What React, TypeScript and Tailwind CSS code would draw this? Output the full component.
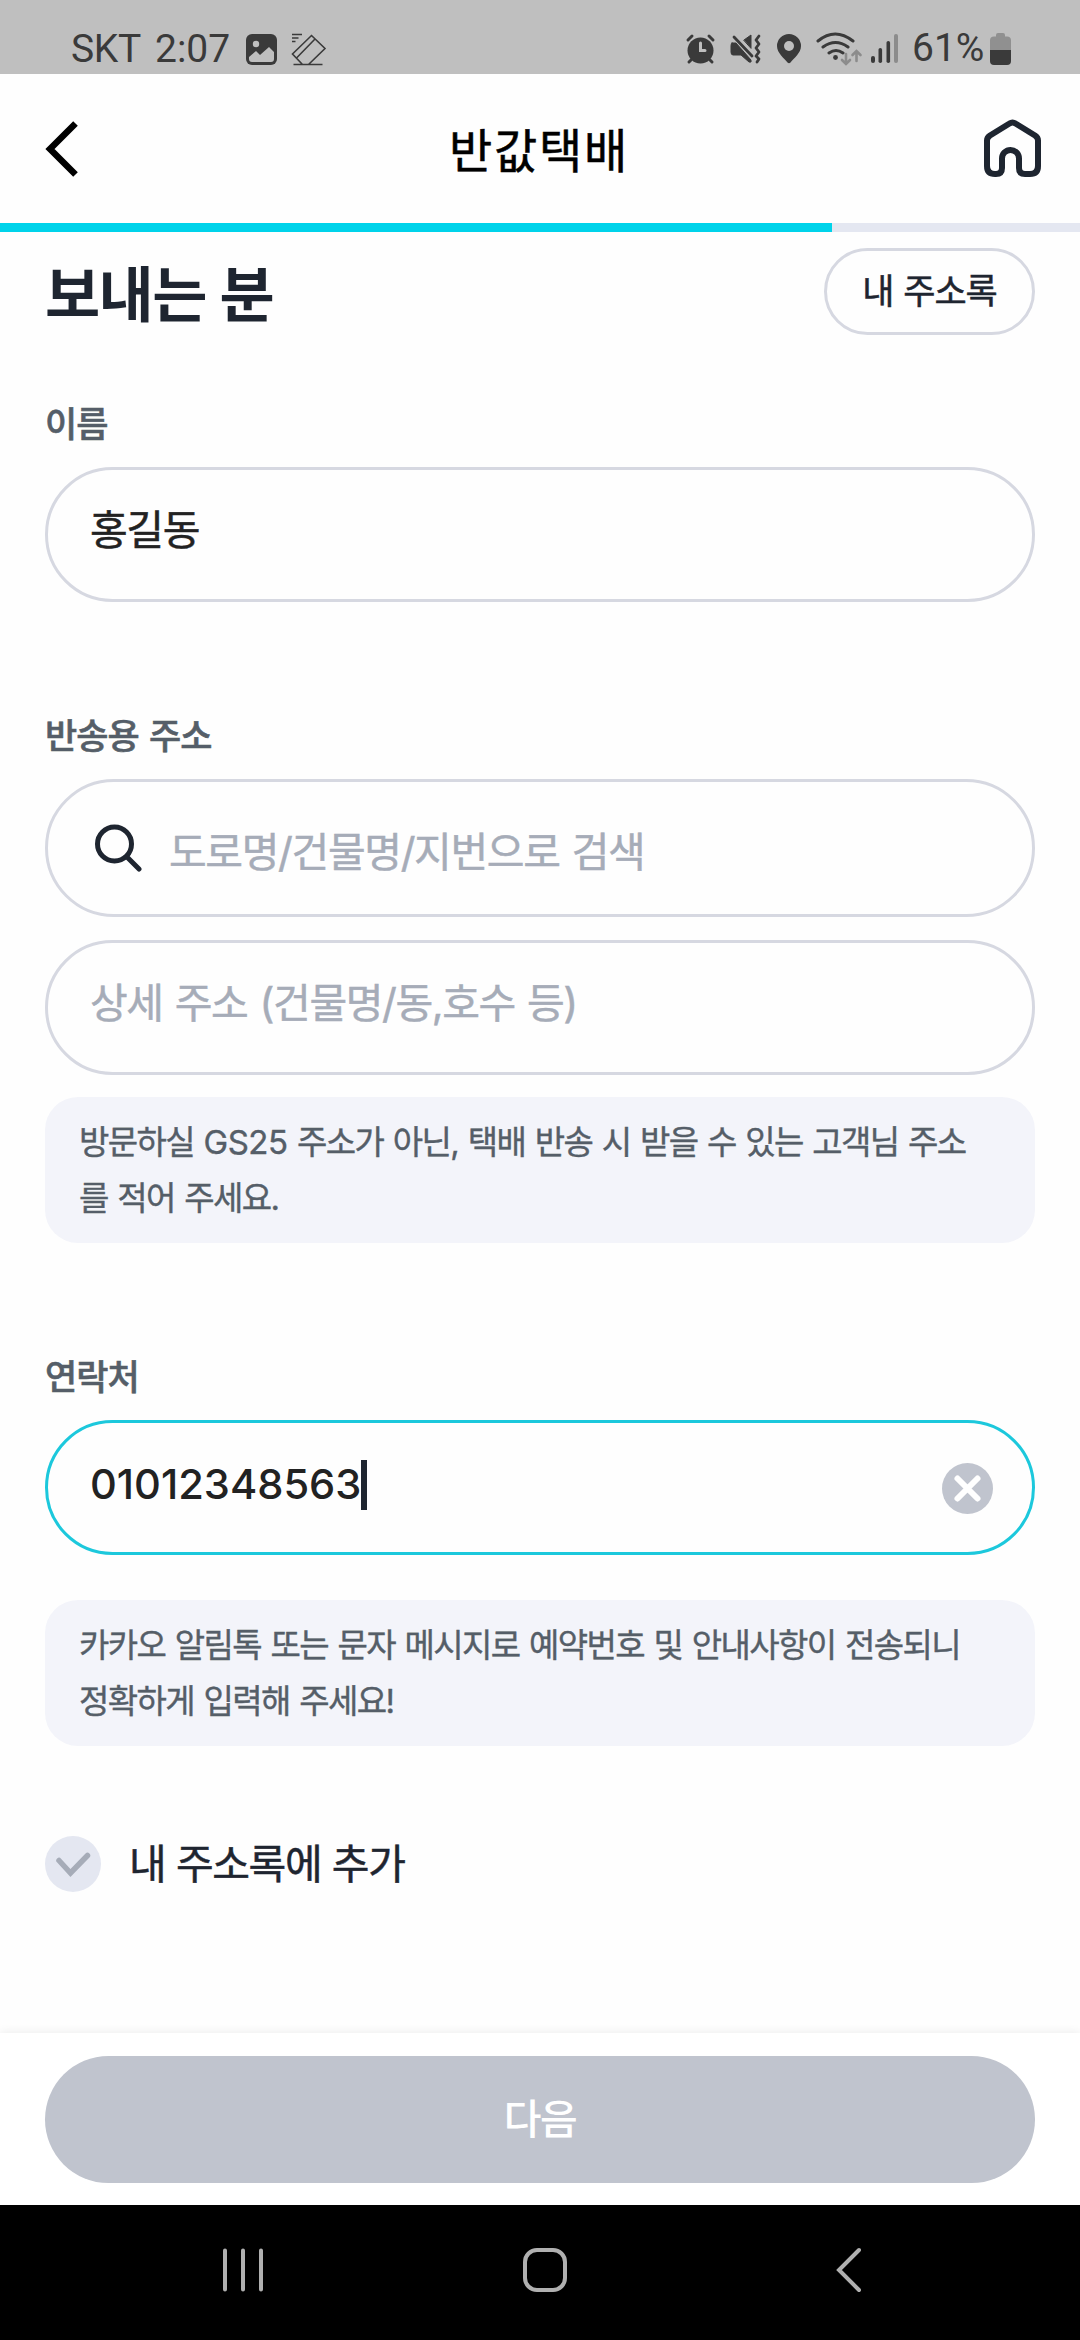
import { useState } from 'react'
import type { ReactNode } from 'react'

function StatusBar() {
  return (
    <div className="flex h-[74px] shrink-0 items-start bg-[#bfbfbf] text-[#3a3a3a]">
      <div className="ml-[71px] flex pt-[26px] font-[Roboto] text-[39px] leading-[46px]">
        <span className="w-[84px] tracking-[-0.3px]">SKT</span>
        <span className="w-[91px]">2:07</span>
      </div>
      <svg className="mt-[34px] h-[31px] w-[31px]" viewBox="0 0 31 31">
        <rect width="31" height="31" rx="6" fill="currentColor" />
        <circle cx="10" cy="10" r="3.2" fill="#bfbfbf" />
        <path d="M3 23l7-6 4 4 9-8 5 5v7q0 3-3 3H6q-3 0-3-3z" fill="#bfbfbf" />
      </svg>
      <svg className="mt-[33px] ml-[14px] h-[33px] w-[36px]" viewBox="0 0 36 33" fill="none" stroke="currentColor" strokeWidth="1.6">
        <path d="M1 1.500h10M1 5h6.500M1 8.500h3.500M20.500 2.500L34 15.500 17.500 31.500h-6L1.500 21zM5.500 25L24 6M2.500 31.500h29" />
      </svg>

      <div className="ml-auto flex pt-[32px]">
        <svg className="h-[36px] w-[182px]" viewBox="0 0 182 36" fill="none" stroke="currentColor" strokeLinecap="round">
          {/* alarm */}
          <circle cx="16.500" cy="18.500" r="13" fill="currentColor" stroke="none" />
          <path d="M4 8l4-4M29 8l-4-4M7 28l-2 2M26 28l2 2" strokeWidth="3" />
          <path d="M16.500 11v7.500H21" stroke="#bfbfbf" strokeWidth="3" />
          {/* muted + vibrate */}
          <path d="M48 11h4l15 17q1 3-2 2l-8-7h-8q-2 0-2-3v-6q0-3 1-3zM60 8l7-5v13z" fill="currentColor" stroke="currentColor" strokeWidth="1" />
          <path d="M50 5l18 19" strokeWidth="2.8" />
          <path d="M75 4l-3 4 3 4-3 4 3 4-3 4 3 3-2 3" strokeWidth="2.800" strokeLinejoin="round" />
          {/* location */}
          <path d="M105 2a12 12 0 0 1 12 12c0 7-7 12-10.500 16.500q-1.500 1.500-3 0C100 26 93 21 93 14a12 12 0 0 1 12-12z" fill="currentColor" stroke="none" />
          <circle cx="105" cy="14" r="5" fill="#bfbfbf" stroke="none" />
          {/* wifi */}
          <path d="M134 9q17-14 35 0M139 15q12.500-9 25 0M145 21q7-5 14 0" strokeWidth="3" />
          <circle cx="151.500" cy="25.500" r="2.400" fill="currentColor" stroke="none" />
          <path d="M162 22v9M158 28l4 4 4-4M172.500 29v-9M168.500 23l4-4 4 4" stroke="#8c8c8c" strokeWidth="2.600" />
        </svg>
        <svg className="ml-[5px] h-[36px] w-[29px]" viewBox="0 0 29 36">
          <rect x="0" y="24" width="4" height="7" rx="2" fill="currentColor" />
          <rect x="7.500" y="16" width="3.600" height="15" rx="1.800" fill="currentColor" />
          <rect x="15.500" y="9" width="3.600" height="22" rx="1.800" fill="currentColor" />
          <rect x="23" y="2" width="4" height="29" rx="2" fill="#8c8c8c" />
        </svg>
      </div>
      <span className="ml-[12px] w-[78px] pt-[25px] font-[Roboto] text-[39px] leading-[46px]">61%</span>
      <svg className="mt-[33px] mr-[69px] h-[32px] w-[21px]" viewBox="0 0 21 32">
        <path d="M6 2q0-2 2-2h5q2 0 2 2v1.500h2q4 0 4 4V17H0V7.500q0-4 4-4h2z" fill="#909090" />
        <path d="M0 17h21v11q0 4-4 4H4q-4 0-4-4z" fill="currentColor" />
      </svg>
    </div>
  )
}

function Header() {
  return (
    <header className="flex h-[149px] shrink-0 items-center justify-between pr-[38px] pl-[45px]">
      <svg className="h-[56px] w-[47px]" viewBox="0 0 47 56" fill="none" stroke="#000" strokeWidth="6.500">
        <path d="M30.500 2.500L5 28l25.500 25.500" />
      </svg>
      <h1 className="pt-[4px] pl-[2px] text-[47px] leading-[60px] font-normal tracking-[1.7px] text-black [-webkit-text-stroke:0.5px]">
        반값택배
      </h1>
      <svg className="mb-[2px] h-[58px] w-[58px]" viewBox="0 0 58 58" fill="none" stroke="#1e2530" strokeWidth="6" strokeLinejoin="round">
        <path d="M25.500 4.500q3-2 6 0L51 16.500q3 2 3 5V47q0 8-8 8h-5q-6 0-6-6V39.500a8.500 8.500 0 0 0-17 0V49q0 6-6 6H11q-8 0-8-8V21.500q0-3 3-5z" />
      </svg>
    </header>
  )
}

function Label({ children }: { children: ReactNode }) {
  return (
    <div className="h-[50px] pt-px text-[35px] leading-[50px] font-medium tracking-[-1px] [word-spacing:2px] text-[#555e68] [-webkit-text-stroke:0.6px]">
      {children}
    </div>
  )
}

function Notice({ children }: { children: ReactNode }) {
  return (
    <div className="h-[146px] rounded-[33px] bg-[#f3f4fa] px-[34px] pt-[17px] text-[33px] leading-[56px] font-normal tracking-[-1.6px] [word-spacing:1.8px] whitespace-nowrap text-[#555e68] [-webkit-text-stroke:0.4px]">
      {children}
    </div>
  )
}

function NavBar() {
  return (
    <nav className="flex h-[135px] shrink-0 items-center bg-black pb-[5px] pl-[223px] text-[#b0b0b0]">
      <svg className="h-[46px] w-[40px]" viewBox="0 0 40 46" stroke="currentColor" strokeWidth="4" strokeLinecap="round">
        <path d="M2 3.500v39M20 3.500v39M38 3.500v39" />
      </svg>
      <svg className="ml-[260px] h-[46px] w-[44px]" viewBox="0 0 44 46" fill="none" stroke="currentColor" strokeWidth="4">
        <rect x="2" y="3" width="40" height="40" rx="12" />
      </svg>
      <svg className="ml-[269px] h-[46px] w-[26px]" viewBox="0 0 26 46" fill="none" stroke="currentColor" strokeWidth="4" strokeLinecap="round">
        <path d="M23 3L3 23l20 20" />
      </svg>
    </nav>
  )
}

export default function App() {
  const [phone] = useState('01012348563')

  return (
    <div className="flex h-[2340px] w-[1080px] flex-col overflow-hidden bg-[#fefefe] font-[Inter,'Noto_Sans_CJK_KR',sans-serif]">
      <StatusBar />
      <Header />
      <div className="h-[9px] shrink-0 bg-[#e4e7f1]">
        <div className="h-full w-[77%] bg-[#00d3ea]" />
      </div>

      <main className="flex flex-1 flex-col px-[45px] pt-[16px]">
        <div className="flex h-[87px] items-center justify-between">
          <h2 className="pt-[6px] text-[60px] leading-[80px] font-bold tracking-[-1.6px] [word-spacing:1px] text-[#1e2530]">
            보내는 분
          </h2>
          <button className="h-[87px] w-[211px] rounded-full border-[3px] border-[#d6d8e1] text-[35px] font-normal tracking-[-1px] [word-spacing:1px] text-[#1e2530] [-webkit-text-stroke:0.5px]">
            내 주소록
          </button>
        </div>

        <section className="mt-[63px]">
          <Label>이름</Label>
          <div className="mt-[19px] flex h-[135px] rounded-full border-[3px] border-[#d6d8e1] pt-[30px] pl-[42px] text-[41px] leading-[60px] font-normal tracking-[-1.4px] text-[#222] [-webkit-text-stroke:0.5px]">
            홍길동
          </div>
        </section>

        <section className="mt-[108px]">
          <Label>반송용 주소</Label>
          <div className="mt-[19px] flex h-[138px] rounded-full border-[3px] border-[#d6d8e1] pt-[40px] pl-[46px]">
            <svg className="h-[50px] w-[50px]" viewBox="0 0 50 50" fill="none" stroke="#1e2530" strokeWidth="5" strokeLinecap="round">
              <circle cx="20.500" cy="22" r="17" />
              <path d="M33 35l12 12" />
            </svg>
            <span className="ml-[25px] text-[41px] leading-[60px] font-normal tracking-[-1.35px] [word-spacing:2px] text-[#a6acb8] [-webkit-text-stroke:0.5px]">
              도로명/건물명/지번으로 검색
            </span>
          </div>
          <div className="mt-[23px] h-[135px] rounded-full border-[3px] border-[#d6d8e1] pt-[30px] pl-[42px] text-[41px] leading-[60px] font-normal tracking-[-1.4px] [word-spacing:2px] text-[#a6acb8] [-webkit-text-stroke:0.5px]">
            상세 주소 (건물명/동,호수 등)
          </div>
          <div className="mt-[22px]">
            <Notice>
              방문하실 <span className="tracking-[-0.5px]">GS25</span> 주소가 아닌, 택배 반송 시 받을 수 있는 고객님 주소
              <br />를 적어 주세요.
            </Notice>
          </div>
        </section>

        <section className="mt-[108px]">
          <Label>연락처</Label>
          <div className="mt-[19px] flex h-[135px] rounded-full border-[3px] border-[#1cc8dc] pr-[39px] pl-[42px]">
            <span className="pt-[31px] text-[41.6px] leading-[60px] font-medium text-[#222]">{phone}</span>
            <span className="mt-[37px] h-[50px] w-[6px] bg-[#1e2530]" />
            <svg className="mt-[40px] ml-auto h-[51px] w-[51px]" viewBox="0 0 51 51">
              <circle cx="25.500" cy="25.500" r="25.500" fill="#c0c4ce" />
              <path d="M15.500 15.500l20 20M35.500 15.500l-20 20" stroke="#fff" strokeWidth="6" strokeLinecap="round" />
            </svg>
          </div>
          <div className="mt-[45px]">
            <Notice>
              카카오 알림톡 또는 문자 메시지로 예약번호 및 안내사항이 전송되니
              <br />
              정확하게 입력해 주세요!
            </Notice>
          </div>
        </section>

        <div className="mt-[90px] flex h-[56px] items-center">
          <svg className="h-[56px] w-[56px]" viewBox="0 0 56 56" fill="none">
            <circle cx="28" cy="28" r="28" fill="#e4e7f1" />
            <path d="M14 24.500L25.500 37 42.500 19.500" stroke="#a6acb8" strokeWidth="5.500" strokeLinecap="round" />
          </svg>
          <span className="ml-[28px] text-[41px] leading-[56px] font-normal tracking-[-1.4px] [word-spacing:0.5px] text-[#1e2530] [-webkit-text-stroke:0.5px]">
            내 주소록에 추가
          </span>
        </div>
      </main>

      <footer className="h-[172px] shrink-0 bg-white px-[45px] pt-[23px] shadow-[0_-2px_8px_rgba(0,0,0,0.06)]">
        <button className="h-[127px] w-full rounded-full bg-[#c0c4ce] text-[41px] font-medium tracking-[-1.5px] text-white">
          다음
        </button>
      </footer>
      <NavBar />
    </div>
  )
}
